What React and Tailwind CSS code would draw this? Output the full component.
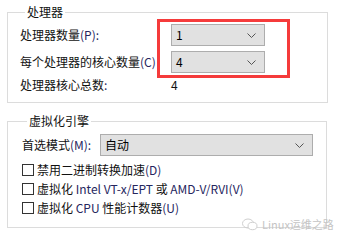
import React from 'react';

const Chevron = () => (
  <svg width="9" height="5" viewBox="0 0 9 5" className="shrink-0">
    <path d="M0.5 0.5 L4.5 4.5 L8.5 0.5" fill="none" stroke="#555" strokeWidth="1" />
  </svg>
);

function Combo({ value, className }) {
  return (
    <div className={`h-[22px] bg-[#e1e1e1] border border-[#adadad] flex items-center justify-between pl-[4px] pr-[8px] ${className}`}>
      <span className="text-[12px] leading-none text-black">{value}</span>
      <Chevron />
    </div>
  );
}

function Check({ children }) {
  return (
    <div className="h-[19px] flex items-center gap-[3px]">
      <div className="w-[12px] h-[12px] border border-[#333] bg-white shrink-0" />
      <span className="text-[12px] leading-none">{children}</span>
    </div>
  );
}

const Lat = ({ children }) => <span className="text-[#26265e]">{children}</span>;

export default function App() {
  return (
    <div
      className="relative w-[337px] h-[244px] bg-white text-[#111] overflow-hidden"
      style={{ fontFamily: "'Noto Sans CJK SC', 'Noto Sans', sans-serif" }}
    >
      {/* 处理器 */}
      <fieldset className="mx-[7px] mt-[4px] w-[321px] border border-[#dcdcdc] pt-[4px] pb-[9px] pl-[12px]">
        <legend className="ml-[5px] px-[2px] text-[12px] leading-[16px]">处理器</legend>
        <div className="grid grid-cols-[151px_94px]">
          <div className="h-[22px] flex items-center text-[12px]">处理器数量<Lat>(P):</Lat></div>
          <Combo value="1" />
          <div className="h-[22px] mt-[5px] flex items-center text-[12px]">每个处理器的核心数量<Lat>(C)</Lat></div>
          <Combo value="4" className="mt-[5px]" />
          <div className="h-[16px] mt-[4px] flex items-center text-[12px]">处理器核心总数<Lat>:</Lat></div>
          <div className="h-[16px] mt-[4px] flex items-center text-[12px]">4</div>
        </div>
      </fieldset>

      {/* 虚拟化引擎 */}
      <fieldset className="mx-[7px] mt-[10px] w-[320px] border border-[#dcdcdc] pt-[5px] pb-[10px] pl-[14px] pr-[13px]">
        <legend className="ml-[5px] px-[2px] text-[12px] leading-[16px]">虚拟化引擎</legend>
        <div className="flex items-center">
          <span className="w-[78px] text-[12px] leading-none">首选模式<Lat>(M):</Lat></span>
          <Combo value="自动" className="flex-1" />
        </div>
        <div className="mt-[4px]">
          <Check>禁用二进制转换加速<Lat>(D)</Lat></Check>
          <Check>虚拟化 <Lat>Intel VT-x/EPT</Lat> 或 <Lat>AMD-V/RVI(V)</Lat></Check>
          <Check>虚拟化 <Lat>CPU</Lat> 性能计数器<Lat>(U)</Lat></Check>
        </div>
      </fieldset>

      {/* 标注 */}
      <div className="absolute left-[157px] top-[19px] w-[133px] h-[59px] border-[3px] border-[#f53b3b]" />

      {/* watermark */}
      <div className="absolute left-[242px] top-[218px] flex items-center gap-[4px] text-[#c4c4c4]">
        <svg width="16" height="13" viewBox="0 0 16 13">
          <ellipse cx="6" cy="5.5" rx="5.5" ry="4.5" fill="none" stroke="#cfcfcf" strokeWidth="1" />
          <ellipse cx="10.5" cy="8" rx="4.5" ry="3.7" fill="white" stroke="#cfcfcf" strokeWidth="1" />
        </svg>
        <span className="text-[11px] leading-none">Linux运维之路</span>
      </div>
    </div>
  );
}
